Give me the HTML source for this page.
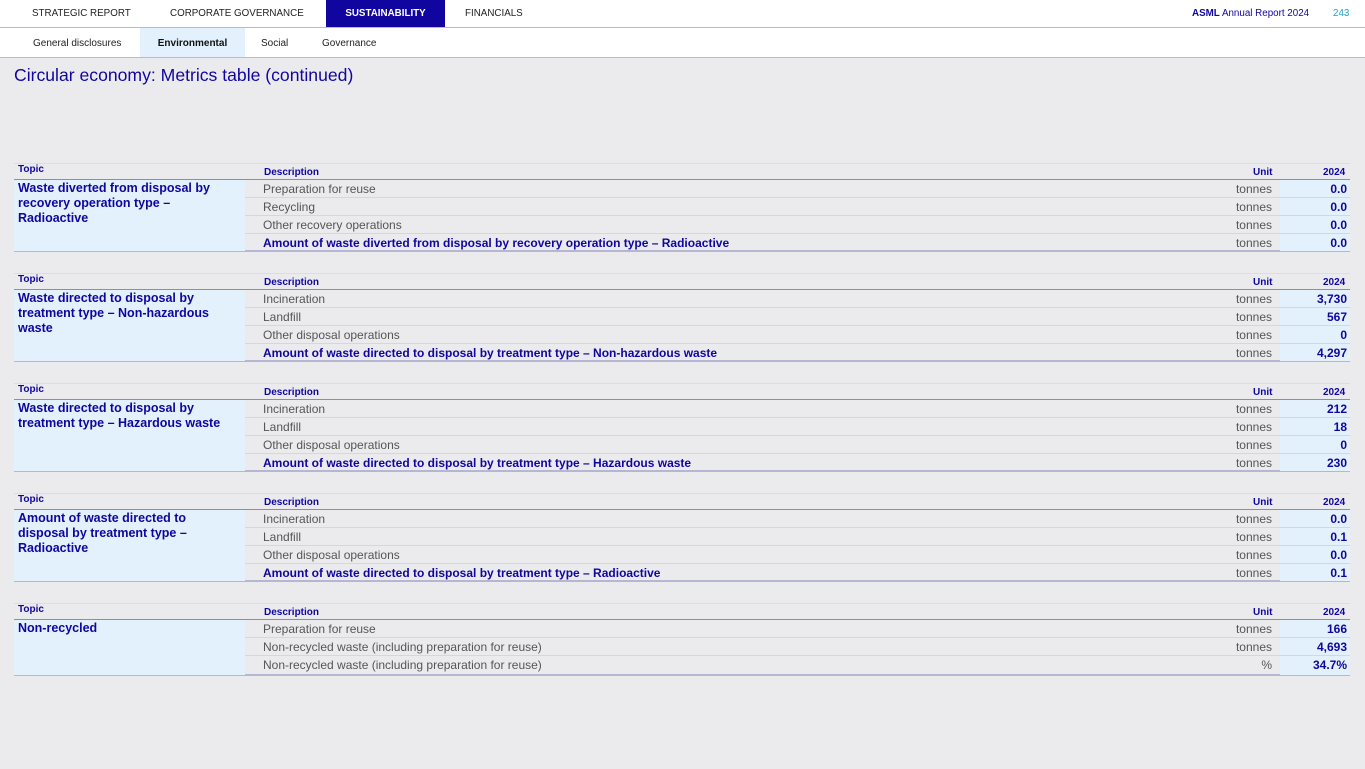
<!DOCTYPE html>
<html><head><meta charset="utf-8"><style>
*{margin:0;padding:0;box-sizing:border-box}
body{width:1365px;height:769px;background:#ebebee;font-family:"Liberation Sans",Arial,sans-serif;position:relative;overflow:hidden;color:#1b1b8f}
.nav{position:absolute;left:0;top:0;width:1365px;height:28px;background:#fff;border-bottom:1px solid #b9b9d0}
.nav span{position:absolute;top:0;height:27px;line-height:28px;font-size:9.8px;color:#222}
.nav .act{background:#10069f;color:#fff;font-weight:bold;text-align:center}
.sub{position:absolute;left:0;top:28px;width:1365px;height:30px;background:#fff;border-bottom:1px solid #b9b9d0}
.sub span{position:absolute;top:0;height:29px;line-height:31px;font-size:10px;color:#222}
h1{position:absolute;left:14px;top:65px;font-size:17.6px;font-weight:normal;color:#10069f}
.t{position:absolute;left:14px;width:1336px;height:90px;border-top:1px solid #dcdce4}
.t .hd{position:absolute;font-size:10px;font-weight:bold;color:#10069f}
.t .tb{position:absolute;left:0;top:15px;width:1336px;height:73px;border-top:1px solid #8a8ac0;border-bottom:2px solid #b5b5d4}
.t .tp{position:absolute;left:0;top:0;width:231px;height:71px;background:#e2f1fb;padding:1px 16px 1px 4px;font-size:12.5px;font-weight:bold;line-height:15px;color:#10069f}
.t .vb{position:absolute;left:1266px;top:0;width:70px;height:71px;background:#e2f1fb}
.r{position:absolute;left:231px;width:1105px;height:18px;border-bottom:1px solid #d6d6df;font-size:12px;line-height:18px;color:#555}
.r .d{position:absolute;left:18px}
.r .u{position:absolute;right:78px}
.r .v{position:absolute;right:3px;font-weight:bold;color:#10069f}
.r.b .d{font-weight:bold;color:#10069f}
</style></head><body>
<div class="nav">
<span style="left:32px">STRATEGIC REPORT</span>
<span style="left:170px">CORPORATE GOVERNANCE</span>
<span class="act" style="left:326px;width:119px">SUSTAINABILITY</span>
<span style="left:465px">FINANCIALS</span>
<span style="left:1192px;color:#10069f"><b>ASML</b> Annual Report 2024</span>
<span style="left:1333px;color:#1ca0c8">243</span>
</div>
<div class="sub">
<span style="left:33px">General disclosures</span>
<span style="left:140px;width:105px;background:#e2f1fb;text-align:center;font-weight:bold;color:#111">Environmental</span>
<span style="left:261px">Social</span>
<span style="left:322px">Governance</span>
</div>
<h1>Circular economy: Metrics table (continued)</h1>

<div class="t" style="top:163px">
<div class="hd" style="left:4px;top:0px">Topic</div><div class="hd" style="left:250px;top:3px">Description</div><div class="hd" style="left:1239px;top:3px">Unit</div><div class="hd" style="left:1309px;top:3px">2024</div>
<div class="tb"><div class="tp">Waste diverted from disposal by recovery operation type – Radioactive</div><div class="vb"></div>
<div class="r" style="top:0"><span class="d">Preparation for reuse</span><span class="u">tonnes</span><span class="v">0.0</span></div>
<div class="r" style="top:18px"><span class="d">Recycling</span><span class="u">tonnes</span><span class="v">0.0</span></div>
<div class="r" style="top:36px"><span class="d">Other recovery operations</span><span class="u">tonnes</span><span class="v">0.0</span></div>
<div class="r b" style="top:54px;border-bottom:none"><span class="d">Amount of waste diverted from disposal by recovery operation type – Radioactive</span><span class="u">tonnes</span><span class="v">0.0</span></div>
</div></div>

<div class="t" style="top:273px">
<div class="hd" style="left:4px;top:0px">Topic</div><div class="hd" style="left:250px;top:3px">Description</div><div class="hd" style="left:1239px;top:3px">Unit</div><div class="hd" style="left:1309px;top:3px">2024</div>
<div class="tb"><div class="tp">Waste directed to disposal by treatment type – Non-hazardous waste</div><div class="vb"></div>
<div class="r" style="top:0"><span class="d">Incineration</span><span class="u">tonnes</span><span class="v">3,730</span></div>
<div class="r" style="top:18px"><span class="d">Landfill</span><span class="u">tonnes</span><span class="v">567</span></div>
<div class="r" style="top:36px"><span class="d">Other disposal operations</span><span class="u">tonnes</span><span class="v">0</span></div>
<div class="r b" style="top:54px;border-bottom:none"><span class="d">Amount of waste directed to disposal by treatment type – Non-hazardous waste</span><span class="u">tonnes</span><span class="v">4,297</span></div>
</div></div>

<div class="t" style="top:383px">
<div class="hd" style="left:4px;top:0px">Topic</div><div class="hd" style="left:250px;top:3px">Description</div><div class="hd" style="left:1239px;top:3px">Unit</div><div class="hd" style="left:1309px;top:3px">2024</div>
<div class="tb"><div class="tp" style="padding-right:4px">Waste directed to disposal by treatment type – Hazardous waste</div><div class="vb"></div>
<div class="r" style="top:0"><span class="d">Incineration</span><span class="u">tonnes</span><span class="v">212</span></div>
<div class="r" style="top:18px"><span class="d">Landfill</span><span class="u">tonnes</span><span class="v">18</span></div>
<div class="r" style="top:36px"><span class="d">Other disposal operations</span><span class="u">tonnes</span><span class="v">0</span></div>
<div class="r b" style="top:54px;border-bottom:none"><span class="d">Amount of waste directed to disposal by treatment type – Hazardous waste</span><span class="u">tonnes</span><span class="v">230</span></div>
</div></div>

<div class="t" style="top:493px">
<div class="hd" style="left:4px;top:0px">Topic</div><div class="hd" style="left:250px;top:3px">Description</div><div class="hd" style="left:1239px;top:3px">Unit</div><div class="hd" style="left:1309px;top:3px">2024</div>
<div class="tb"><div class="tp">Amount of waste directed to disposal by treatment type – Radioactive</div><div class="vb"></div>
<div class="r" style="top:0"><span class="d">Incineration</span><span class="u">tonnes</span><span class="v">0.0</span></div>
<div class="r" style="top:18px"><span class="d">Landfill</span><span class="u">tonnes</span><span class="v">0.1</span></div>
<div class="r" style="top:36px"><span class="d">Other disposal operations</span><span class="u">tonnes</span><span class="v">0.0</span></div>
<div class="r b" style="top:54px;border-bottom:none"><span class="d">Amount of waste directed to disposal by treatment type – Radioactive</span><span class="u">tonnes</span><span class="v">0.1</span></div>
</div></div>

<div class="t" style="top:603px">
<div class="hd" style="left:4px;top:0px">Topic</div><div class="hd" style="left:250px;top:3px">Description</div><div class="hd" style="left:1239px;top:3px">Unit</div><div class="hd" style="left:1309px;top:3px">2024</div>
<div class="tb" style="height:57px"><div class="tp" style="height:55px">Non-recycled</div><div class="vb" style="height:55px"></div>
<div class="r" style="top:0"><span class="d">Preparation for reuse</span><span class="u">tonnes</span><span class="v">166</span></div>
<div class="r" style="top:18px"><span class="d">Non-recycled waste (including preparation for reuse)</span><span class="u">tonnes</span><span class="v">4,693</span></div>
<div class="r" style="top:36px;border-bottom:none"><span class="d">Non-recycled waste (including preparation for reuse)</span><span class="u">%</span><span class="v">34.7%</span></div>
</div></div>
</body></html>
